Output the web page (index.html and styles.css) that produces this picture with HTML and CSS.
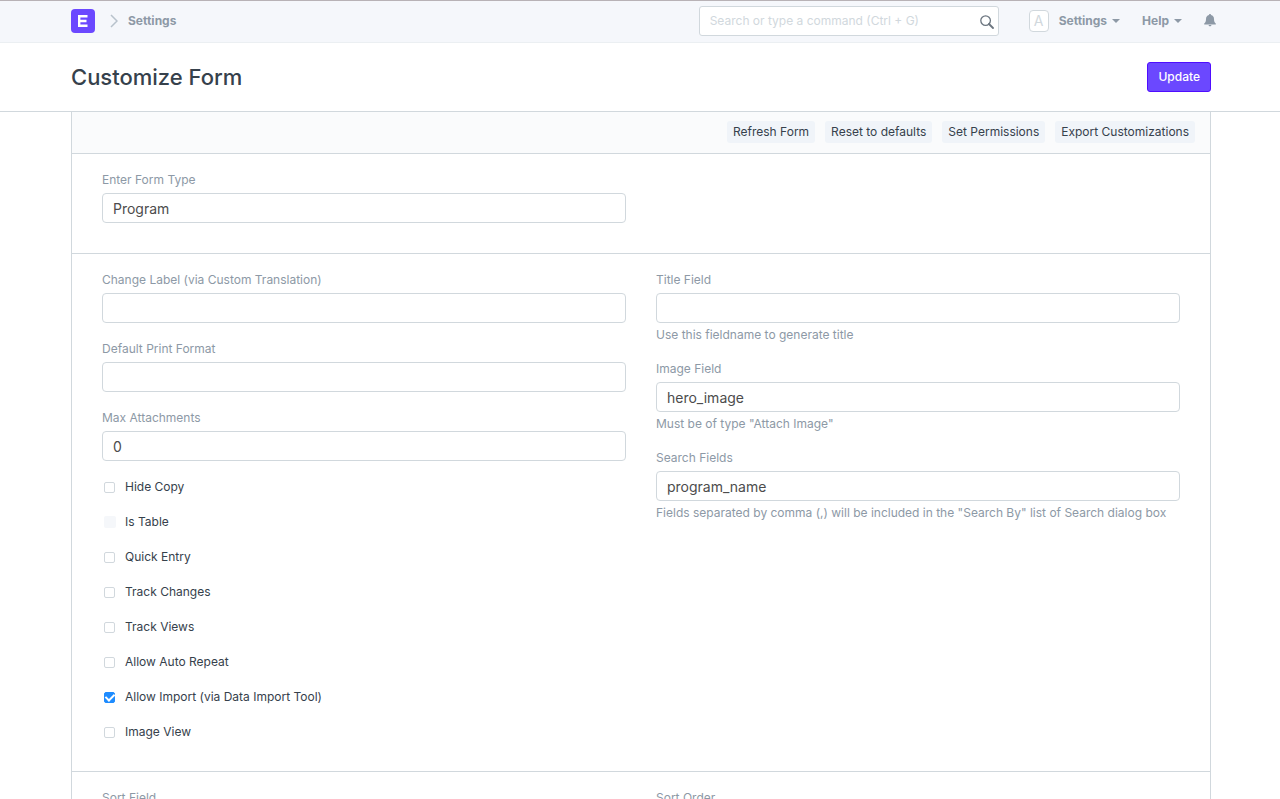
FILE: index.html
```html
<!DOCTYPE html>
<html lang="en">
<head>
  <meta charset="UTF-8">
  <meta name="viewport" content="width=device-width, initial-scale=1.0">
  <title>Customize Form</title>
  <link rel="stylesheet" href="styles.css">
</head>
<body>
  <header class="navbar">
    <div class="container navbar-inner">
      <nav class="breadcrumbs">
        <a href="#" class="logo" aria-label="Home">
          <svg width="24" height="24" viewBox="0 0 24 24">
            <rect width="24" height="24" rx="4" fill="#6b48ff"/>
            <path d="M7 7.200h9.500M7 12h8.500M7 16.800h9.500M8.200 6v12" fill="none" stroke="#fff" stroke-width="2.400"/>
          </svg>
        </a>
        <svg class="chevron" width="8" height="14" viewBox="0 0 8 14">
          <path d="M1 1l6 6-6 6" fill="none" stroke="#b8c2cc" stroke-width="1.5"/>
        </svg>
        <a href="#" class="nav-link">Settings</a>
      </nav>
      <div class="nav-right">
        <div class="search">
          <input type="text" class="search-input" aria-label="Search" placeholder="Search or type a command (Ctrl + G)">
          <svg class="search-icon" width="14" height="14" viewBox="0 0 14 14">
            <circle cx="5.6" cy="5.6" r="4.8" fill="none" stroke="#6c7680" stroke-width="1.3"/>
            <path d="M9 9l4 4" stroke="#6c7680" stroke-width="1.8" stroke-linecap="round"/>
          </svg>
        </div>
        <a href="#" class="nav-link user-link">
          <span class="avatar">A</span>
          Settings
          <span class="caret"></span>
        </a>
        <a href="#" class="nav-link help-link">Help <span class="caret"></span></a>
        <a href="#" class="bell" aria-label="Notifications">
          <svg width="12" height="13" viewBox="0 0 12 13">
            <path d="M6 0c.7 0 1 .4 1 1 2 .5 3 2 3 4 0 2.500.5 3.500 1.800 4.500V10.500H.2V9.500C1.500 8.500 2 7.500 2 5c0-2 1-3.500 3-4 0-.6.3-1 1-1z" fill="#8d99a6"/>
            <path d="M4.600 11h2.800c0 .8-.6 1.300-1.400 1.300S4.600 11.800 4.600 11z" fill="#8d99a6"/>
          </svg>
        </a>
      </div>
    </div>
  </header>

  <div class="page-head">
    <div class="container page-head-inner">
      <h1>Customize Form</h1>
      <button type="button" class="btn-primary">Update</button>
    </div>
  </div>

  <main class="container">
    <form class="form-layout">
      <div class="toolbar">
        <button type="button" class="btn-tool">Refresh Form</button>
        <button type="button" class="btn-tool">Reset to defaults</button>
        <button type="button" class="btn-tool">Set Permissions</button>
        <button type="button" class="btn-tool">Export Customizations</button>
      </div>

      <section class="form-section">
        <div class="form-column">
          <div class="form-group">
            <label for="formType">Enter Form Type</label>
            <input type="text" id="formType" class="form-control" value="Program">
          </div>
        </div>
      </section>

      <section class="form-section">
        <div class="form-column">
          <div class="form-group">
            <label for="changeLabel">Change Label (via Custom Translation)</label>
            <input type="text" id="changeLabel" class="form-control">
          </div>
          <div class="form-group">
            <label for="printFormat">Default Print Format</label>
            <input type="text" id="printFormat" class="form-control">
          </div>
          <div class="form-group">
            <label for="maxAttachments">Max Attachments</label>
            <input type="text" id="maxAttachments" class="form-control" value="0">
          </div>
          <label class="check"><input type="checkbox"> Hide Copy</label>
          <label class="check"><input type="checkbox" disabled> Is Table</label>
          <label class="check"><input type="checkbox"> Quick Entry</label>
          <label class="check"><input type="checkbox"> Track Changes</label>
          <label class="check"><input type="checkbox"> Track Views</label>
          <label class="check"><input type="checkbox"> Allow Auto Repeat</label>
          <label class="check"><input type="checkbox" checked> Allow Import (via Data Import Tool)</label>
          <label class="check"><input type="checkbox"> Image View</label>
        </div>
        <div class="form-column">
          <div class="form-group">
            <label for="titleField">Title Field</label>
            <input type="text" id="titleField" class="form-control">
            <p class="help-box">Use this fieldname to generate title</p>
          </div>
          <div class="form-group">
            <label for="imageField">Image Field</label>
            <input type="text" id="imageField" class="form-control" value="hero_image">
            <p class="help-box">Must be of type "Attach Image"</p>
          </div>
          <div class="form-group">
            <label for="searchFields">Search Fields</label>
            <input type="text" id="searchFields" class="form-control" value="program_name">
            <p class="help-box">Fields separated by comma (,) will be included in the "Search By" list of Search dialog box</p>
          </div>
        </div>
      </section>

      <section class="form-section">
        <div class="form-column">
          <div class="form-group">
            <label for="sortField">Sort Field</label>
            <input type="text" id="sortField" class="form-control">
          </div>
        </div>
        <div class="form-column">
          <div class="form-group">
            <label for="sortOrder">Sort Order</label>
            <input type="text" id="sortOrder" class="form-control">
          </div>
        </div>
      </section>
    </form>
  </main>
</body>
</html>
```
FILE: styles.css
```css
* {
  box-sizing: border-box;
}
body {
  margin: 0;
  font-family: Inter, "Open Sans", sans-serif;
  font-size: 12px;
  line-height: 18px;
  color: #36414c;
  background-color: #fff;
}
a {
  color: inherit;
  text-decoration: none;
}
input, button {
  font-family: inherit;
}
.container {
  max-width: 1142px;
  margin: 0 auto;
  padding-left: 2px;
}

/* navbar */
.navbar {
  background-color: #f5f7fb;
  border-top: 1px solid #b8b2b6;
  border-bottom: 1px solid #ebeff2;
}
.navbar-inner {
  display: flex;
  justify-content: space-between;
  align-items: center;
  height: 41px;
  padding-bottom: 2px;
}
.breadcrumbs, .nav-right, .nav-link {
  display: flex;
  align-items: center;
}
.logo {
  display: flex;
  margin-right: 15px;
}
.chevron {
  margin-right: 10px;
}
.nav-link {
  font-weight: 700;
  color: #8d99a6;
}
.search {
  position: relative;
  width: 300px;
  margin-right: 30px;
}
.search-input {
  display: block;
  width: 100%;
  height: 30px;
  padding: 0 30px 0 10px;
  border: 1px solid #d1d8dd;
  border-radius: 3px;
  font-size: 12px;
  color: #36414c;
  background-color: #fff;
}
.search-input::placeholder {
  color: #d1d8dd;
  opacity: 1;
}
.search-icon {
  position: absolute;
  top: 9px;
  right: 5px;
}
.avatar {
  width: 20px;
  height: 22px;
  margin-right: 10px;
  border: 1px solid #d1d8dd;
  border-radius: 4px;
  background-color: #fff;
  color: #d1d8dd;
  font-size: 14px;
  font-weight: 400;
  line-height: 20px;
  text-align: center;
}
.caret {
  margin-left: 5px;
  border-top: 4px solid #8d99a6;
  border-left: 4px solid transparent;
  border-right: 4px solid transparent;
}
.help-link {
  margin-left: 20px;
}
.bell {
  display: flex;
  margin-left: 20px;
  margin-right: -6px;
}
.nav-right {
  margin-right: 1px;
}
.nav-right .nav-link {
  padding-right: 2px;
}

/* page title */
.page-head {
  border-bottom: 1px solid #d1d8dd;
}
.page-head-inner {
  display: flex;
  justify-content: space-between;
  align-items: center;
  height: 68px;
}
h1 {
  margin: 0;
  font-size: 22px;
  line-height: 30px;
  font-weight: 500;
}
.btn-primary {
  height: 30px;
  padding: 0 10px 1px;
  border: 1px solid #4f0dff;
  border-radius: 3px;
  background-color: #6b48ff;
  color: #fff;
  font-size: 12px;
  font-weight: 500;
  cursor: pointer;
}

/* form */
.form-layout {
  border: 1px solid #d1d8dd;
  border-top: none;
}
.toolbar {
  display: flex;
  justify-content: flex-end;
  gap: 10px;
  padding: 9px 15px 10px;
  background-color: #fafbfc;
}
.btn-tool {
  height: 22px;
  padding: 0 6px 2px;
  border: none;
  border-radius: 3px;
  background-color: #f0f4f9;
  color: #36414c;
  font-size: 12px;
  cursor: pointer;
}
.form-section {
  display: grid;
  grid-template-columns: 1fr 1fr;
  gap: 30px;
  padding: 17px 30px 13px;
  border-top: 1px solid #d1d8dd;
}
.form-group {
  margin-bottom: 17px;
  color: #8d99a6;
}
.form-group label {
  display: block;
  margin-bottom: 4px;
}
.form-control {
  display: block;
  width: 100%;
  height: 30px;
  padding: 0 10px;
  border: 1px solid #d1d8dd;
  border-radius: 4px;
  background-color: #fff;
  color: #4c4c4c;
  font-size: 14px;
}
.help-box {
  margin: 3px 0 0;
  line-height: 17px;
}
.check {
  display: flex;
  align-items: center;
  margin-bottom: 17px;
}
.check input {
  appearance: none;
  width: 11px;
  height: 11px;
  margin: 0 10px 0 2px;
  border: 1px solid #d1d8dd;
  border-radius: 2px;
  background-color: #fff;
}
.check input:checked {
  display: grid;
  place-items: center;
  border-color: #1e8cff;
  background-color: #1e8cff;
}
.check input:checked::before {
  content: "";
  width: 4px;
  height: 7px;
  margin-top: -2px;
  border: solid #fff;
  border-width: 0 2px 2px 0;
  transform: rotate(45deg);
}
.check input:disabled {
  width: 12px;
  height: 12px;
  margin-right: 9px;
  border: none;
  background-color: #f5f7fa;
}
```
